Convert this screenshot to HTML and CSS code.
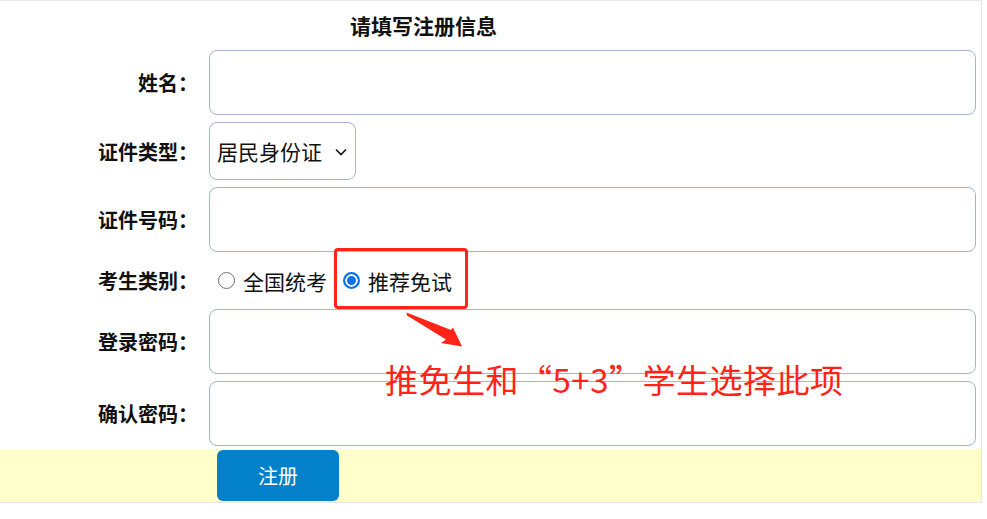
FILE: index.html
```html
<!DOCTYPE html>
<html>
<head>
  <meta charset="utf-8">
  <title>注册</title>
  <link rel="stylesheet" href="styles.css">
</head>
<body>
  <div class="page">
    <h2 class="title">请填写注册信息</h2>

    <form class="reg-form">
      <div class="row">
        <label class="label">姓名：</label>
        <input class="field" type="text">
      </div>
      <div class="row row-select">
        <label class="label">证件类型：</label>
        <div class="select-wrap">
          <select class="select">
            <option>居民身份证</option>
          </select>
          <svg class="chevron" width="14" height="10" viewBox="0 0 14 10"><path d="M2 2.5 L7 7.5 L12 2.5" fill="none" stroke="#111" stroke-width="1.6"/></svg>
        </div>
      </div>
      <div class="row">
        <label class="label">证件号码：</label>
        <input class="field" type="text">
      </div>
      <div class="row row-radio">
        <label class="label">考生类别：</label>
        <div class="radios">
          <label class="radio"><input type="radio" name="kind">全国统考</label>
          <label class="radio"><input type="radio" name="kind" checked>推荐免试</label>
        </div>
      </div>
      <div class="row">
        <label class="label">登录密码：</label>
        <input class="field" type="password">
      </div>
      <div class="row">
        <label class="label">确认密码：</label>
        <input class="field" type="password">
      </div>
      <div class="actions">
        <button type="button" class="btn">注册</button>
      </div>
    </form>

    <!-- 标注 -->
    <div class="mark-box"></div>
    <svg class="mark-arrow" width="70" height="45" viewBox="400 305 70 45">
      <polygon points="406.5,312.5 451,330 453,327.5 462,346.5 441,343 446,339.5 407,315.5" fill="#ff2318"/>
    </svg>
    <div class="mark-text">推免生和“5+3”学生选择此项</div>
  </div>
</body>
</html>
```

FILE: styles.css
```css
body {
  margin: 0;
  font-family: "Noto Sans CJK SC", "Liberation Sans", sans-serif;
  color: #111;
  background: #fff;
}
.page {
  position: relative;
  width: 981px;
  border-top: 1px solid #e8e8e8;
  border-right: 1px solid #e4e4e4;
  border-bottom: 1px solid #e4e4e4;
}
.title {
  margin: 0;
  height: 49px;
  line-height: 49px;
  padding-left: 350px;
  font-size: 21px;
  font-weight: bold;
}
.reg-form {
  display: flex;
  flex-direction: column;
  gap: 7px;
}
.row {
  display: grid;
  grid-template-columns: 200px 767px;
  column-gap: 9px;
  align-items: center;
}
.label {
  text-align: right;
  font-size: 20px;
  font-weight: bold;
  padding-right: 2px;
}
.field {
  box-sizing: border-box;
  height: 65px;
  border: 1px solid #a3b6cc;
  border-radius: 8px;
  outline: none;
  font-size: 20px;
  padding: 0 10px;
}
.select-wrap {
  position: relative;
  width: 147px;
}
.select {
  box-sizing: border-box;
  width: 147px;
  height: 58px;
  appearance: none;
  -webkit-appearance: none;
  border: 1px solid #a3b6cc;
  border-radius: 8px;
  background: #fff;
  font-family: inherit;
  font-size: 21px;
  color: #111;
  padding: 0 0 0 7px;
}
.chevron {
  position: absolute;
  right: 8px;
  top: 25px;
}
.row-radio {
  height: 43px;
}
.radios {
  display: flex;
  align-items: center;
  gap: 16px;
  padding-left: 9px;
}
.radio {
  display: flex;
  align-items: center;
  gap: 8px;
  font-size: 21px;
}
.radio input {
  appearance: none;
  -webkit-appearance: none;
  box-sizing: border-box;
  width: 17px;
  height: 17px;
  margin: 0;
  border: 1px solid #6f6f6f;
  border-radius: 50%;
  background: #fff;
}
.radio input:checked {
  border: 2px solid #0a72e8;
  background: #0a72e8;
  box-shadow: inset 0 0 0 2px #fff;
}
.actions {
  margin-top: -4px;
  background: #ffffcc;
  height: 53px;
  padding: 1px 0 0 217px;
  box-sizing: border-box;
}
.btn {
  width: 122px;
  height: 51px;
  border: none;
  border-radius: 6px;
  background: #0380ca;
  color: #fff;
  font-family: inherit;
  font-size: 20px;
  cursor: pointer;
}
.btn:hover {
  background: #026aa8;
}
.mark-box {
  position: absolute;
  left: 334px;
  top: 247px;
  width: 128px;
  height: 55px;
  border: 3px solid #ff2318;
  border-radius: 4px;
}
.mark-arrow {
  position: absolute;
  left: 400px;
  top: 304px;
}
.mark-text {
  position: absolute;
  left: 385px;
  top: 356px;
  font-size: 33px;
  letter-spacing: 0.5px;
  line-height: 44px;
  color: #ff2318;
  white-space: nowrap;
}
```
